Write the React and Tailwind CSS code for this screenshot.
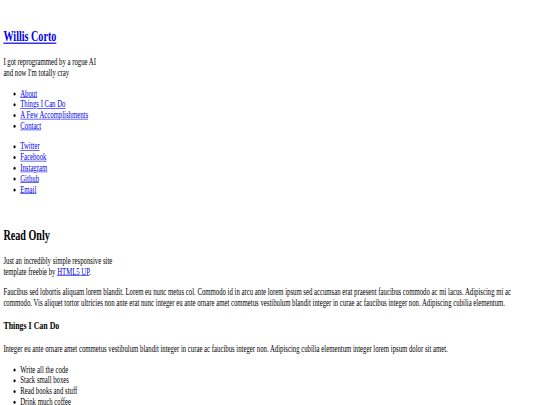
const navLinks = ['About', 'Things I Can Do', 'A Few Accomplishments', 'Contact'];
const socialLinks = ['Twitter', 'Facebook', 'Instagram', 'Github', 'Email'];
const skills = ['Write all the code', 'Stack small boxes', 'Read books and stuff', 'Drink much coffee', 'Lunch time', 'Also a cat'];

const link = 'text-[#0000ee] underline';

// empty image slot: keeps the blank line the broken <img> leaves behind
function ImageSlot() {
    return (
        <div>
            <span className="inline-block" />
        </div>
    );
}

export default function App() {
    return (
        <div className="w-[540px] h-[405px] overflow-hidden bg-white">
            <div className="w-[1280px] px-2 pt-[10px] pb-2 origin-top-left scale-x-[0.421875] scale-y-[0.6] font-['Liberation_Serif',serif] text-[16px] leading-[normal] text-black">
                <section>
                    <header>
                        <ImageSlot />
                        <h1 className="my-[19.92px] text-[24px] font-bold">
                            <a href="#" className={link}>Willis Corto</a>
                        </h1>
                        <p className="my-4">
                            I got reprogrammed by a rogue AI
                            <br />
                            and now I'm totally cray
                        </p>
                    </header>
                    <nav>
                        <ul className="my-4 list-disc pl-10">
                            {navLinks.map((item) => (
                                <li key={item}>
                                    <a href="#" className={link}>{item}</a>
                                </li>
                            ))}
                        </ul>
                    </nav>
                    <footer>
                        <ul className="my-4 list-disc pl-10">
                            {socialLinks.map((item) => (
                                <li key={item}>
                                    <a href="#" className={link}>{item}</a>
                                </li>
                            ))}
                        </ul>
                    </footer>
                </section>
                <div>
                    <section>
                        <ImageSlot />
                        <div>
                            <header>
                                <h2 className="my-[19.92px] text-[24px] font-bold">Read Only</h2>
                                <p className="my-4">
                                    Just an incredibly simple responsive site
                                    <br />
                                    template freebie by <a href="#" className={link}>HTML5 UP</a>.
                                </p>
                            </header>
                            <p className="my-4">
                                Faucibus sed lobortis aliquam lorem blandit. Lorem eu nunc metus col. Commodo id in arcu ante lorem ipsum sed accumsan erat praesent faucibus commodo ac mi lacus. Adipiscing mi ac commodo. Vis aliquet tortor ultricies non ante erat nunc integer eu ante ornare amet commetus vestibulum blandit integer in curae ac faucibus integer non. Adipiscing cubilia elementum.
                            </p>
                        </div>
                    </section>
                    <section>
                        <div>
                            <h3 className="my-[18.72px] text-[18.72px] font-bold">Things I Can Do</h3>
                            <p className="my-4">
                                Integer eu ante ornare amet commetus vestibulum blandit integer in curae ac faucibus integer non. Adipiscing cubilia elementum integer lorem ipsum dolor sit amet.
                            </p>
                            <ul className="my-4 list-disc pl-10">
                                {skills.map((item) => (
                                    <li key={item}>{item}</li>
                                ))}
                            </ul>
                        </div>
                    </section>
                </div>
            </div>
        </div>
    );
}
